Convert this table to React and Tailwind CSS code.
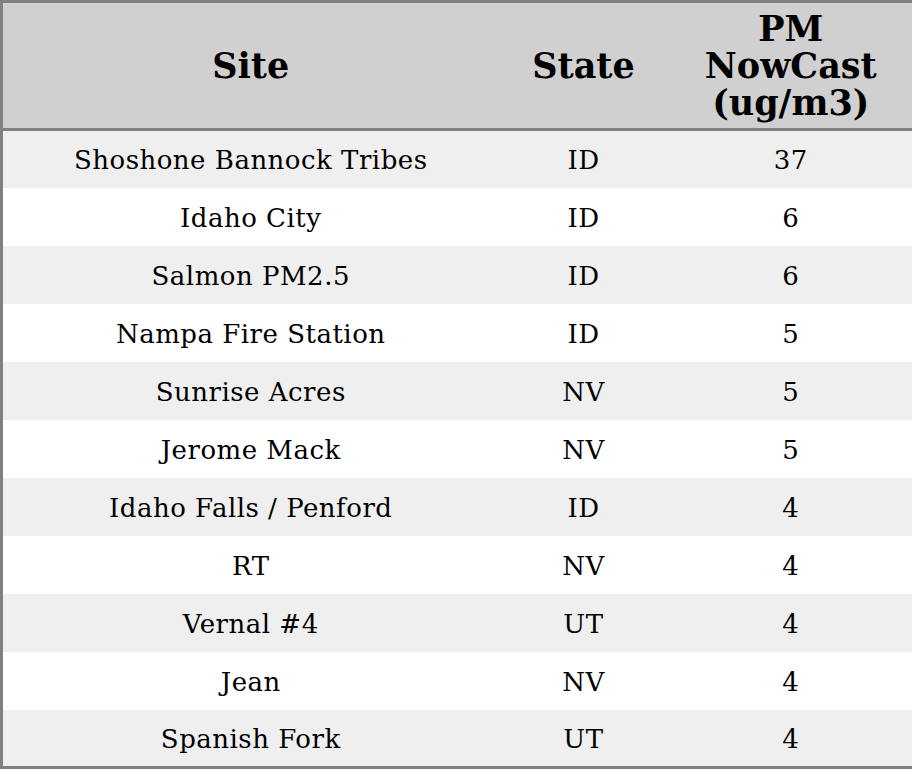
const rows = [
  ["Shoshone Bannock Tribes", "ID", "37"],
  ["Idaho City", "ID", "6"],
  ["Salmon PM2.5", "ID", "6"],
  ["Nampa Fire Station", "ID", "5"],
  ["Sunrise Acres", "NV", "5"],
  ["Jerome Mack", "NV", "5"],
  ["Idaho Falls / Penford", "ID", "4"],
  ["RT", "NV", "4"],
  ["Vernal #4", "UT", "4"],
  ["Jean", "NV", "4"],
  ["Spanish Fork", "UT", "4"],
];

const App = () => {
  return (
    <div className="w-[912px] h-[769px] bg-white font-['DejaVu_Serif',serif] text-black">
      <table className="w-[912px] border-[3px] border-[#808080] border-collapse table-fixed">
        <colgroup>
          <col className="w-[497px]" />
          <col className="w-[170px]" />
          <col className="w-[246px]" />
        </colgroup>
        <thead>
          <tr className="bg-[#d0d0d0] h-[128px] border-b-[3px] border-[#808080]">
            <th className="text-[35px] leading-[37px] font-bold">Site</th>
            <th className="text-[35px] leading-[37px] font-bold">State</th>
            <th className="text-[35px] leading-[37px] font-bold">
              PM
              <br />
              NowCast
              <br />
              (ug/m3)
            </th>
          </tr>
        </thead>
        <tbody>
          {rows.map((r, i) => (
            <tr
              key={i}
              className={`h-[58px] text-[26px] tracking-[0.5px] ${i % 2 === 0 ? "bg-[#efefef]" : "bg-white"}`}
            >
              <td className="text-center pt-[3px]">{r[0]}</td>
              <td className="text-center pt-[3px]">{r[1]}</td>
              <td className="text-center pt-[3px]">{r[2]}</td>
            </tr>
          ))}
        </tbody>
      </table>
    </div>
  );
};

export default App;
